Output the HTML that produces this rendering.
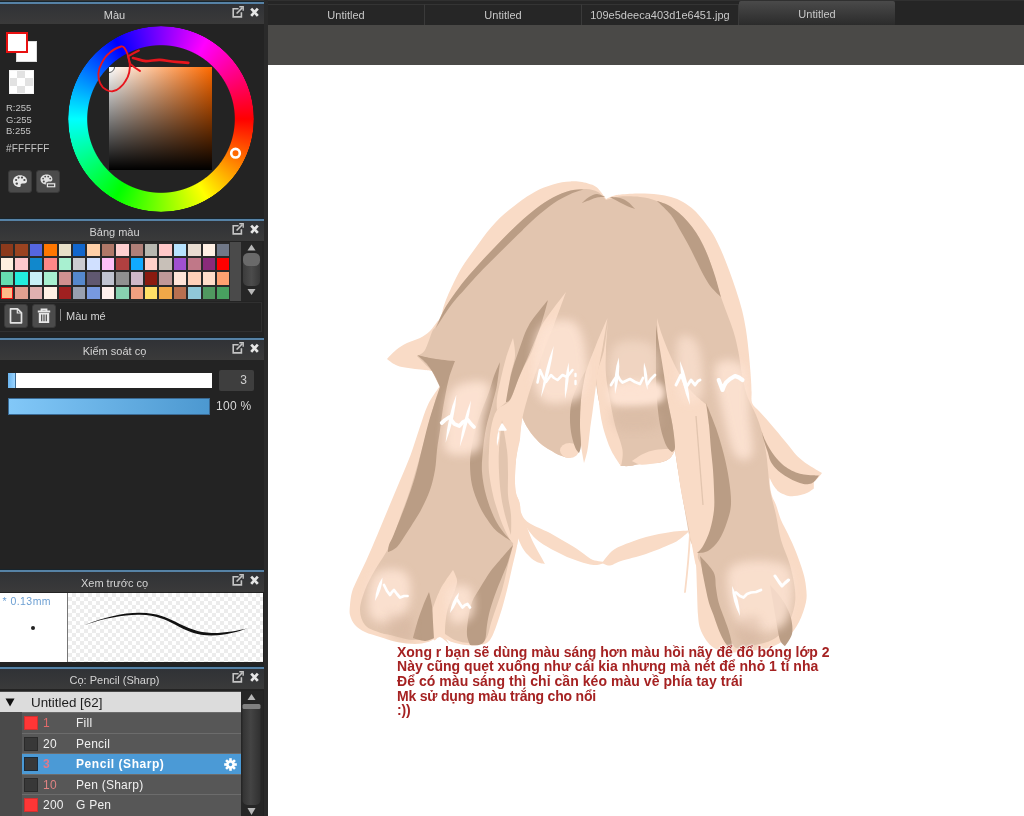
<!DOCTYPE html>
<html lang="vi">
<head>
<meta charset="utf-8">
<title>MediBang Paint</title>
<style>
*{box-sizing:border-box;margin:0;padding:0}
html,body{width:1024px;height:816px;overflow:hidden;background:#232323;font-family:"Liberation Sans",sans-serif;font-size:11px;color:#d0d0d0}
.abs{position:absolute}
#left,#main{will-change:transform}
#left{position:absolute;left:0;top:0;width:264px;height:816px;background:#232323;overflow:hidden}
#sep{position:absolute;left:264px;top:0;width:4px;height:816px;background:#2a2a2a}
#main{position:absolute;left:268px;top:0;width:756px;height:816px;background:#4a4947;overflow:hidden}
.ph{position:absolute;left:0;width:264px;height:22px;border-top:2px solid #5682a6;box-shadow:0 -1px 0 #17242c;background:linear-gradient(#303236,#3a3a3a);}
.ph .t{position:absolute;left:0;width:229px;top:4.5px;text-align:center;font-size:11px;color:#d4d4d4;line-height:13px}
.ph svg{position:absolute;top:0;left:0}

/* color panel */
#wheel{position:absolute;left:68px;top:26px;width:186px;height:186px;border-radius:50%;background:conic-gradient(from 90deg,#ff0000,#ffff00,#00ff00,#00ffff,#0000ff,#ff00ff,#ff0000);-webkit-mask:radial-gradient(circle closest-side,transparent 73.3px,#000 74.3px,#000 92.3px,transparent 93.2px);mask:radial-gradient(circle closest-side,transparent 73.3px,#000 74.3px,#000 92.3px,transparent 93.2px)}
#sv{position:absolute;left:109px;top:67px;width:103px;height:103px;background:linear-gradient(to top,#000,rgba(0,0,0,0)),linear-gradient(to right,#fff,#ff6a00);overflow:hidden}
.rgb{position:absolute;left:6px;font-size:9.5px;color:#c4c4c4;line-height:11px;white-space:nowrap}
.btn{position:absolute;background:#4b4b4b;border-radius:3px;border:1px solid #3a3a3a}
/* palette */
#pal{position:absolute;left:0;top:242px;width:230px;height:59px;background:#2a2a2a}
#pal i{position:absolute;width:12.4px;height:12.4px;display:block}

/* brush list */
.br{position:absolute;left:22px;width:219px;height:19.6px;background:#575757;font-size:12px;color:#f0f0f0;line-height:21px;white-space:nowrap;letter-spacing:.25px}
.br b{position:absolute;left:2px;top:3px;width:14px;height:14px;border:1px solid #2a2a2a;background:#383838}
.br b.r{background:#ff3636;border-color:#d03030}
.br s{position:absolute;left:21px;top:0;text-decoration:none}
.br u{position:absolute;left:54px;top:0;text-decoration:none}
/* tabs */
#tabbar{position:absolute;left:0;top:0;width:756px;height:25px;background:#252525;border-top:1px solid #303030}
.tab{position:absolute;top:3px;height:21px;background:#262626;border-top:1px solid #343434;border-right:1px solid #3a3a3a;color:#c8c8c8;font-size:11px;text-align:center;line-height:21px}
#canvas{position:absolute;left:0;top:65px;width:756px;height:751px;background:#fff}
#cap{position:absolute;left:129px;top:579.5px;font-size:14px;font-weight:bold;line-height:14.7px;color:#a52222;white-space:nowrap;text-shadow:0 0 2px #fff,0 0 2px #fff,0 0 3px #fff;letter-spacing:-.2px}
</style>
</head>
<body>
<div id="left">
  <div class="abs" style="left:0;top:0;width:264px;height:1px;background:#363636"></div><div class="abs" style="left:0;top:1px;width:264px;height:1px;background:#1e2428"></div>
  <!-- Color panel -->
  <div class="ph" style="top:2px"><svg style="top:-4px" width="264" height="26" viewBox="0 0 264 26"><g fill="none" stroke="#c4c4c4" stroke-width="1.6"><path d="M238.6 8.800H233.200V16.900H241.400V12.200"/><path d="M236.600 13.500L242.400 7.600"/><path d="M239.300 6.800H243.200V10.700" stroke-width="1.400"/></g><path d="M251.200 8.600L257.800 15.800M257.800 8.600L251.200 15.800" stroke="#e6e6e6" stroke-width="2.700" fill="none"/></svg><div class="t">Màu</div></div>
  
  <div id="wheel"></div>
  <div id="sv"><div class="abs" style="left:-6px;top:-6px;width:12px;height:12px;border:1px solid #555;border-radius:50%;background:#fff"></div></div>
  <svg class="abs" style="left:0;top:24px" width="264" height="195" viewBox="0 24 264 195">
    <circle cx="235.5" cy="153.2" r="4.3" fill="none" stroke="#fff" stroke-width="2.6"/>
    <path d="M121.1 46.5C116 48 112 50.5 109.3 53.2C105.5 56 103.5 59.5 101.8 62.9C99.8 66.5 98.6 70 98.4 73.6C98.2 77.5 98.8 80.5 100.2 83.3C101.6 86.3 103.6 88.4 106.1 89.7C108.2 90.9 110.4 91.5 112.6 91.3C115.4 91 117.8 89.6 120 87.6C122.3 85.8 124 83.6 125.4 81.1C127.3 78.4 128.5 75.6 129.2 72.5C129.9 69.6 130 66.8 129.7 63.9C129.5 60.5 128.7 57.3 127.6 54.3C126.8 51.8 125.8 49.6 124.4 47.8C123.4 46.6 122.2 46.2 121.1 46.5Z" fill="none" stroke="#e8151d" stroke-width="1.9" stroke-linejoin="round"/>
    <path d="M138.9 50.5C135 52.3 131.5 54.3 128.1 56.4C128.6 59 129.3 61.5 130.3 63.9C133 66.5 136.3 68.8 139.9 70.9" fill="none" stroke="#e8151d" stroke-width="2" stroke-linecap="round" stroke-linejoin="round"/>
    <path d="M133 58C137.5 59 141.5 60.6 145.9 61.2C150.5 61.2 155 59.6 159.8 59.8C165 60.2 170.5 61.6 175.9 61.8C180 62 184.5 62.3 188.3 62.9" fill="none" stroke="#e8151d" stroke-width="2.7" stroke-linecap="round" stroke-linejoin="round"/>
  </svg>
  <div class="abs" style="left:16px;top:41px;width:21px;height:21px;background:#fff;border:1px solid #ddd"></div>
  <div class="abs" style="left:6px;top:32px;width:22px;height:21px;background:#fff;border:2px solid #e81010"></div>
  <div class="abs" style="left:9px;top:70px;width:25px;height:24px;border:1px solid #f4f4f4;background-color:#fff;background-image:conic-gradient(#e2e2e2 25%,#fff 0 50%,#e2e2e2 0 75%,#fff 0);background-size:16px 16px;background-position:-1px -1px"></div>
  <div class="rgb" style="top:102px">R:255</div>
  <div class="rgb" style="top:113.5px">G:255</div>
  <div class="rgb" style="top:124.500px">B:255</div>
  <div class="rgb" style="top:143px;font-size:10px;letter-spacing:.2px">#FFFFFF</div>
  <div class="btn" style="left:8px;top:170px;width:24px;height:23px">
    <svg width="22" height="21" viewBox="0 0 22 21"><path d="M11 4.2c-4 0-7 2.6-7 6 0 3.300 2.800 5.800 6.300 5.800 1.100 0 1.600-.7 1.400-1.500-.3-1.100.3-2 1.500-2h2c1.700 0 2.800-1 2.800-2.700 0-3.200-3-5.600-7-5.600z" fill="#e8e8e8"/><g fill="#4b4b4b"><circle cx="7.100" cy="9" r="1.100"/><circle cx="9.600" cy="6.600" r="1.100"/><circle cx="13" cy="6.600" r="1.100"/><circle cx="15.400" cy="9" r="1.100"/><circle cx="7.800" cy="12.600" r="1.200"/></g></svg>
  </div>
  <div class="btn" style="left:36px;top:170px;width:24px;height:23px">
    <svg width="22" height="21" viewBox="0 0 22 21"><path d="M9.500 3.500c-3.500 0-6 2.200-6 5.100 0 2.800 2.400 4.900 5.300 4.900 1 0 1.400-.6 1.200-1.300-.2-.9.300-1.700 1.300-1.700h1.700c1.500 0 2.400-.9 2.400-2.300 0-2.700-2.500-4.700-5.900-4.700z" fill="#e0e0e0"/><g fill="#4b4b4b"><circle cx="6.100" cy="7.600" r=".9"/><circle cx="8.200" cy="5.600" r=".9"/><circle cx="11.200" cy="5.600" r=".9"/><circle cx="13.200" cy="7.600" r=".9"/><circle cx="6.800" cy="10.600" r="1"/></g><rect x="9.300" y="11.800" width="9.500" height="5" fill="#e8e8e8" stroke="#4b4b4b" stroke-width=".8"/><rect x="11" y="13.400" width="6" height="1.800" fill="#4b4b4b"/></svg>
  </div>
  <!-- Palette panel -->
  <div class="ph" style="top:219px"><svg style="top:-4px" width="264" height="26" viewBox="0 0 264 26"><g fill="none" stroke="#c4c4c4" stroke-width="1.6"><path d="M238.6 8.800H233.200V16.900H241.400V12.200"/><path d="M236.600 13.500L242.400 7.600"/><path d="M239.300 6.800H243.200V10.700" stroke-width="1.400"/></g><path d="M251.200 8.600L257.800 15.800M257.800 8.600L251.200 15.800" stroke="#e6e6e6" stroke-width="2.700" fill="none"/></svg><div class="t">Bảng màu</div></div>
  
  <div id="pal"><i style="left:1.0px;top:1.6px;background:#8b3a1c"></i><i style="left:15.4px;top:1.6px;background:#9a4320"></i><i style="left:29.8px;top:1.6px;background:#5566e0"></i><i style="left:44.2px;top:1.6px;background:#ff7700"></i><i style="left:58.6px;top:1.6px;background:#e8e0c8"></i><i style="left:73.0px;top:1.6px;background:#1166cc"></i><i style="left:87.4px;top:1.6px;background:#ffd0a8"></i><i style="left:101.8px;top:1.6px;background:#b07868"></i><i style="left:116.2px;top:1.6px;background:#ffd0d0"></i><i style="left:130.6px;top:1.6px;background:#b08078"></i><i style="left:145.0px;top:1.6px;background:#b8b8b0"></i><i style="left:159.4px;top:1.6px;background:#ffc8c8"></i><i style="left:173.8px;top:1.6px;background:#b8e4ff"></i><i style="left:188.2px;top:1.6px;background:#e8dcd0"></i><i style="left:202.6px;top:1.6px;background:#fff0e4"></i><i style="left:217.0px;top:1.6px;background:#707888"></i><i style="left:1.0px;top:16.0px;background:#fff0e0"></i><i style="left:15.4px;top:16.0px;background:#ffc8cc"></i><i style="left:29.8px;top:16.0px;background:#1188cc"></i><i style="left:44.2px;top:16.0px;background:#ff8888"></i><i style="left:58.6px;top:16.0px;background:#a8f0d0"></i><i style="left:73.0px;top:16.0px;background:#ccccd0"></i><i style="left:87.4px;top:16.0px;background:#d0e0ff"></i><i style="left:101.8px;top:16.0px;background:#ffc0f8"></i><i style="left:116.2px;top:16.0px;background:#b04040"></i><i style="left:130.6px;top:16.0px;background:#11aaff"></i><i style="left:145.0px;top:16.0px;background:#ffd0c8"></i><i style="left:159.4px;top:16.0px;background:#c8c0b8"></i><i style="left:173.8px;top:16.0px;background:#a050d0"></i><i style="left:188.2px;top:16.0px;background:#c07888"></i><i style="left:202.6px;top:16.0px;background:#8a2a7a"></i><i style="left:217.0px;top:16.0px;background:#ff0000"></i><i style="left:1.0px;top:30.4px;background:#66ddb0"></i><i style="left:15.4px;top:30.4px;background:#22eedd"></i><i style="left:29.8px;top:30.4px;background:#c8f0f8"></i><i style="left:44.2px;top:30.4px;background:#a8f0d0"></i><i style="left:58.6px;top:30.4px;background:#d09090"></i><i style="left:73.0px;top:30.4px;background:#5588cc"></i><i style="left:87.4px;top:30.4px;background:#605870"></i><i style="left:101.8px;top:30.4px;background:#c0c4d0"></i><i style="left:116.2px;top:30.4px;background:#909090"></i><i style="left:130.6px;top:30.4px;background:#d0b8c8"></i><i style="left:145.0px;top:30.4px;background:#8b1a10"></i><i style="left:159.4px;top:30.4px;background:#c09898"></i><i style="left:173.8px;top:30.4px;background:#ffe4d8"></i><i style="left:188.2px;top:30.4px;background:#ffd0b8"></i><i style="left:202.6px;top:30.4px;background:#ffdcc8"></i><i style="left:217.0px;top:30.4px;background:#ffa070"></i><i style="left:1.0px;top:44.8px;background:#ffbb88;border:1.5px solid #f01010"></i><i style="left:15.4px;top:44.8px;background:#e0a090"></i><i style="left:29.8px;top:44.8px;background:#e0b0b0"></i><i style="left:44.2px;top:44.8px;background:#fff0e4"></i><i style="left:58.6px;top:44.8px;background:#a02020"></i><i style="left:73.0px;top:44.8px;background:#98a0b0"></i><i style="left:87.4px;top:44.8px;background:#7799e0"></i><i style="left:101.8px;top:44.8px;background:#fff0ec"></i><i style="left:116.2px;top:44.8px;background:#88d0b0"></i><i style="left:130.6px;top:44.8px;background:#f0a080"></i><i style="left:145.0px;top:44.8px;background:#ffe066"></i><i style="left:159.4px;top:44.8px;background:#f0a848"></i><i style="left:173.8px;top:44.8px;background:#b87050"></i><i style="left:188.2px;top:44.8px;background:#90c8d8"></i><i style="left:202.6px;top:44.8px;background:#509860"></i><i style="left:217.0px;top:44.8px;background:#48a060"></i></div>
  <div class="abs" style="left:230px;top:242px;width:11px;height:59px;background:#4a4a4a"></div>
  <div class="abs" style="left:241px;top:242px;width:21px;height:59px;background:#262626">
    <svg width="21" height="59" viewBox="0 0 21 59"><defs><linearGradient id="sbg" x1="0" x2="1" y1="0" y2="0"><stop offset="0" stop-color="#3c3c3c"/><stop offset=".5" stop-color="#4c4c4c"/><stop offset="1" stop-color="#383838"/></linearGradient></defs><path d="M10.500 2.500L14.500 8.500H6.500Z" fill="#b8b8b8"/><rect x="2" y="11" width="17" height="33" rx="5" fill="url(#sbg)"/><rect x="2" y="11" width="17" height="13" rx="5.500" fill="#6a6a6a"/><path d="M10.500 53L14.500 47H6.500Z" fill="#b8b8b8"/></svg>
  </div>
  <div class="abs" style="left:0;top:302px;width:262px;height:30px;border:1px solid #303030;border-left:none;background:#232323"></div>
  <div class="btn" style="left:4px;top:304px;width:24px;height:24px">
    <svg width="22" height="22" viewBox="0 0 22 22"><path d="M5.500 3.800H12.500L16.500 7.800V17.800H5.500Z" fill="none" stroke="#e4e4e4" stroke-width="1.700" stroke-linejoin="round"/><path d="M12.300 4V8H16.300" fill="none" stroke="#e4e4e4" stroke-width="1.200"/></svg>
  </div>
  <div class="btn" style="left:32px;top:304px;width:24px;height:24px">
    <svg width="22" height="22" viewBox="0 0 22 22"><path d="M4.800 6.500H17.200M8.500 6V4.300H13.500V6" fill="none" stroke="#e8e8e8" stroke-width="1.800"/><path d="M5.800 8V18H16.200V8Z" fill="#e8e8e8"/><path d="M8.700 9.500V16.300M11 9.500V16.300M13.300 9.500V16.300" stroke="#4b4b4b" stroke-width="1.200"/></svg>
  </div>
  <div class="abs" style="left:60px;top:309px;width:1px;height:12px;background:#8a8a8a"></div>
  <div class="abs" style="left:66px;top:309px;font-size:11px;color:#d4d4d4;line-height:14px">Màu mé</div>
  <!-- Brush control -->
  <div class="ph" style="top:338px"><svg style="top:-4px" width="264" height="26" viewBox="0 0 264 26"><g fill="none" stroke="#c4c4c4" stroke-width="1.6"><path d="M238.6 8.800H233.200V16.900H241.400V12.200"/><path d="M236.600 13.500L242.400 7.600"/><path d="M239.300 6.800H243.200V10.700" stroke-width="1.400"/></g><path d="M251.200 8.600L257.800 15.800M257.800 8.600L251.200 15.800" stroke="#e6e6e6" stroke-width="2.700" fill="none"/></svg><div class="t">Kiểm soát cọ</div></div>
  
  <div class="abs" style="left:8px;top:373px;width:204px;height:15px;background:#fff"><div style="width:8px;height:15px;background:linear-gradient(to right,#6ab4ee,#9ad4ff);border-right:1px solid #3a6a94"></div></div>
  <div class="abs" style="left:219px;top:370px;width:35px;height:21px;background:#3e3e3e;border-radius:2px;color:#d0d0d0;font-size:12px;line-height:21px;text-align:right;padding-right:7px">3</div>
  <div class="abs" style="left:8px;top:398px;width:202px;height:17px;background:linear-gradient(to right,#82c8f8,#4c98d0);border:1px solid #3a6a94"></div>
  <div class="abs" style="left:216px;top:399px;font-size:12px;color:#d8d8d8;line-height:14px;letter-spacing:.3px">100 %</div>
  <!-- Brush preview -->
  <div class="ph" style="top:570px"><svg style="top:-4px" width="264" height="26" viewBox="0 0 264 26"><g fill="none" stroke="#c4c4c4" stroke-width="1.6"><path d="M238.6 8.800H233.200V16.900H241.400V12.200"/><path d="M236.600 13.500L242.400 7.600"/><path d="M239.300 6.800H243.200V10.700" stroke-width="1.400"/></g><path d="M251.200 8.600L257.800 15.800M257.800 8.600L251.200 15.800" stroke="#e6e6e6" stroke-width="2.700" fill="none"/></svg><div class="t">Xem trước cọ</div></div>
  
  <div class="abs" style="left:0;top:593px;width:67px;height:69px;background:#fff"></div>
  <div class="abs" style="left:2.5px;top:595px;font-size:10.5px;color:#6c9fd2;line-height:12px;letter-spacing:.45px">* 0.13mm</div>
  <div class="abs" style="left:31px;top:626px;width:4px;height:4px;border-radius:50%;background:#222"></div>
  <div class="abs" style="left:67px;top:593px;width:1px;height:69px;background:#777"></div>
  <div class="abs" style="left:68px;top:593px;width:195px;height:69px;background-color:#fff;background-image:conic-gradient(#ececec 25%,#fff 0 50%,#ececec 0 75%,#fff 0);background-size:8px 8px"></div>
  <svg class="abs" style="left:68px;top:593px" width="195" height="69" viewBox="68 593 195 69"><path d="M84.6 624.9C105 616.8 125 612.4 140 612.7C158 613 166 617.300 175 621.6C188 628.2 198 632.8 212 632.900C226 633 238 630.5 248.7 627.900C238 631.5 226 635.3 212 635.5C197 635.600 187 631.2 174.500 624.2C165 619.5 157 615.2 140 614.7C125 614.300 105 618 84.6 624.900Z" fill="#111"/></svg>
  <!-- Brush list -->
  <div class="ph" style="top:667px"><svg style="top:-4px" width="264" height="26" viewBox="0 0 264 26"><g fill="none" stroke="#c4c4c4" stroke-width="1.6"><path d="M238.6 8.800H233.200V16.900H241.400V12.200"/><path d="M236.600 13.500L242.400 7.600"/><path d="M239.300 6.800H243.200V10.700" stroke-width="1.400"/></g><path d="M251.200 8.600L257.800 15.800M257.800 8.600L251.200 15.800" stroke="#e6e6e6" stroke-width="2.700" fill="none"/></svg><div class="t">Cọ: Pencil (Sharp)</div></div>

  <div class="abs" style="left:0;top:691px;width:241px;height:125px;background:#4a4a4a"></div>
  <div class="abs" style="left:0;top:692px;width:241px;height:20px;background:#dcdcdc;color:#1c1c1c;font-size:13.4px;line-height:21px"><svg class="abs" style="left:5px;top:6px" width="10" height="9" viewBox="0 0 10 9"><path d="M0.500 0.500H9.500L5 8.500Z" fill="#111"/></svg><span class="abs" style="left:31px;top:0;white-space:nowrap">Untitled [62]</span></div>
  <div class="abs" style="left:22px;top:712px;width:219px;height:104px;background:#6c6c6c"></div>
  <div class="br" style="top:713px"><b class="r"></b><s style="color:#e06a6a">1</s><u>Fill</u></div>
  <div class="br" style="top:733.6px"><b></b><s>20</s><u>Pencil</u></div>
  <div class="br" style="top:754.200px;background:#4b9ad6;font-weight:bold;color:#fff;letter-spacing:.55px"><b style="border-color:#1a2a3a"></b><s style="color:#e07a8a">3</s><u>Pencil (Sharp)</u>
    <svg class="abs" style="left:202px;top:4px" width="13" height="13" viewBox="-6.500 -6.500 13 13"><g fill="#fff"><circle r="4.300"/><rect x="-1.300" y="-6.300" width="2.600" height="12.600"/><rect x="-6.300" y="-1.300" width="12.600" height="2.600"/><g transform="rotate(45)"><rect x="-1.300" y="-6.300" width="2.600" height="12.600"/><rect x="-6.300" y="-1.300" width="12.600" height="2.600"/></g></g><circle r="1.700" fill="#4b9ad6"/></svg>
  </div>
  <div class="br" style="top:774.800px"><b></b><s style="color:#e08484">10</s><u>Pen (Sharp)</u></div>
  <div class="br" style="top:795.400px;height:21px"><b class="r"></b><s>200</s><u>G Pen</u></div>
  <div class="abs" style="left:241px;top:691px;width:22px;height:125px;background:#262626">
    <svg width="22" height="125" viewBox="0 0 22 125"><defs><linearGradient id="sbg2" x1="0" x2="1" y1="0" y2="0"><stop offset="0" stop-color="#333"/><stop offset=".45" stop-color="#444"/><stop offset="1" stop-color="#303030"/></linearGradient></defs><path d="M10.500 3L14.500 9H6.500Z" fill="#b8b8b8"/><rect x="1.500" y="13" width="18" height="101" rx="5" fill="url(#sbg2)"/><rect x="1.500" y="13" width="18" height="5" rx="1.500" fill="#808080"/><path d="M10.500 124L14.500 117H6.500Z" fill="#b8b8b8"/></svg>
  </div>
</div>
<div id="sep"></div>
<div id="main">
  <div id="tabbar">
    <div class="tab" style="left:0;width:157px">Untitled</div>
    <div class="tab" style="left:157px;width:157px">Untitled</div>
    <div class="tab" style="left:314px;width:157px">109e5deeca403d1e6451.jpg</div>
    <div class="tab" style="left:471px;width:156px;top:0;height:24px;line-height:26px;border:none;border-radius:2px 2px 0 0;background:linear-gradient(#4a4a4a,#2b2b2b)">Untitled</div>
  </div>
  <div id="canvas"><svg class="abs" style="left:0;top:0" width="756" height="751" viewBox="268 65 756 751"><defs><filter id="b3" x="-30%" y="-30%" width="160%" height="160%"><feGaussianBlur stdDeviation="3"/></filter><filter id="b5" x="-30%" y="-30%" width="160%" height="160%"><feGaussianBlur stdDeviation="5"/></filter><filter id="b2" x="-30%" y="-30%" width="160%" height="160%"><feGaussianBlur stdDeviation="1.6"/></filter></defs>
<path d="M387 359C387 359 392.7 352.7 396 350C399.3 347.3 403 345 407 343C411 341 416.2 340 420 338C423.8 336 427.2 333.7 430 331C432.8 328.3 435.2 324.2 437 322C438.8 319.8 439.4 320.5 440.5 318C441.6 315.5 442.3 310.7 443.5 307C444.7 303.3 445.5 300.8 447.6 296C449.7 291.2 453.1 283.6 456 278C458.9 272.4 462 267.3 465 262.6C468 257.9 471.1 254.1 474 250C476.9 245.9 479.9 241.8 482.7 238C485.5 234.2 488.1 230.9 491 227.5C493.9 224.1 497 220.7 500 217.8C503 214.9 506 212.5 509 210C512 207.5 515 205.2 518 203C521 200.8 524.1 198.4 527 196.5C529.9 194.6 532.7 192.9 535.5 191.4C538.3 189.9 541.1 188.7 544 187.5C546.9 186.3 550 185.3 553 184.4C556 183.5 559.1 182.8 562 182.3C564.9 181.8 567.6 181.5 570.6 181.4C573.6 181.3 577.1 181.5 580 181.8C582.9 182.2 585.2 182.6 588 183.5C590.8 184.4 594 184.9 597 187.5C600 190.1 606 199 606 199C606 199 610.5 196.8 613 196C615.5 195.2 616.5 194.9 621 194.5C625.5 194.1 633.8 193.5 640 193.5C646.2 193.5 652.8 193.9 658 194.5C663.2 195.1 666.8 195.8 671 197C675.2 198.2 679.2 199.8 683 202C686.8 204.2 690.7 207 694 210C697.3 213 699.8 216 703 220C706.2 224 710 229 713 234C716 239 718.3 244 721 250C723.7 256 726.5 263.3 729 270C731.5 276.7 733.8 283.3 736 290C738.2 296.7 740.3 303.3 742 310C743.7 316.7 744.8 322.5 746 330C747.2 337.5 748.2 346.7 749 355C749.8 363.3 750.6 373.8 751 380C751.4 386.2 751.3 388.2 751.5 392C751.7 395.8 750.8 399.8 752 403C753.2 406.2 756.5 408.3 759 411C761.5 413.7 764.3 416.6 766.8 419.4C769.3 422.2 771.5 425.1 774 428C776.5 430.9 779 434 781.5 437C784 440 786.6 443.1 789 446C791.4 448.9 793.7 452.2 796 454.7C798.3 457.2 800.5 459 803 461C805.5 463 807.7 464.5 810.9 466.5C814.1 468.5 822 473 822 473C822 473 819.4 476.5 818 478C816.6 479.5 813.8 482 813.8 482C813.8 482 813.8 488.5 813.8 488.5C813.8 488.5 810.2 491.4 808 492.5C805.8 493.6 802.9 494.4 800.6 495C798.3 495.6 796 495.8 794 496C792 496.2 790.6 496.3 788.8 496C787 495.7 784.7 494.8 783 494C781.3 493.2 780.1 492.9 778.5 491.5C776.9 490.1 775 487.8 773.5 485.5C772 483.2 769.7 478 769.7 478C769.7 478 769.6 483 770 486C770.4 489 771 492.8 772 496C773 499.2 774.5 501 776 505C777.5 509 779 515.2 781 520C783 524.8 785.5 528.7 788 534C790.5 539.3 793.5 545.7 796 552C798.5 558.3 801.3 566.2 803 572C804.7 577.8 805.5 582 806 587C806.5 592 807.2 596.2 806 602C804.8 607.8 802 616.2 799 622C796 627.8 792.2 633 788 637C783.8 641 779 643.8 774 646C769 648.2 763.3 649 758 650C752.7 651 747.3 651.7 742 652C736.7 652.3 730.7 652.7 726 652C721.3 651.3 717.3 650 714 648C710.7 646 708.3 643.3 706 640C703.7 636.7 701.3 632.2 700 628C698.7 623.8 698.5 621.3 698 615C697.5 608.7 697.3 598.3 697 590C696.7 581.7 696.5 571.3 696 565C695.5 558.7 694.8 556.2 694 552C693.2 547.8 692.3 546.2 691 540C689.7 533.8 687.7 523.3 686 515C684.3 506.7 682.3 497.5 681 490C679.7 482.5 679 476.7 678 470C677 463.3 675 450 675 450C675 450 672.2 456 670 458C667.8 460 665 461.2 662 462C659 462.8 655.7 462.7 652 463C648.3 463.3 643.7 463.5 640 464C636.3 464.5 633.2 465.7 630 466C626.8 466.3 621 466 621 466C621 466 616.8 458.3 615 454C613.2 449.7 611.8 445.7 610 440C608.2 434.3 605.9 426.7 604 420C602.1 413.3 600 406.3 598.7 400C597.4 393.7 596 382 596 382C596 382 592.2 401 590 410C587.8 419 584.7 430.2 583 436C581.3 441.8 580.9 442.2 580 445C579.1 447.8 578.5 450.7 577.5 452.5C576.5 454.3 575.7 455.2 574 456C572.3 456.8 570 457.7 567.5 457.5C565 457.3 561.9 456.2 559 455C556.1 453.8 553 451.8 550 450C547 448.2 543.9 446.5 541 444C538.1 441.5 534.8 437.8 532.5 435C530.2 432.2 528.8 430 527 427C525.2 424 522 417 522 417C522 417 520 440 520 440C520 440 516.8 453.3 516 460C515.2 466.7 515 474.5 515 480C515 485.5 515.2 488.8 516 493C516.8 497.2 519.3 499.7 520 505C520.7 510.3 520.5 518.2 520 525C519.5 531.8 518.3 538.8 517 546C515.7 553.2 513.7 560.7 512 568C510.3 575.3 509 582.2 507 590C505 597.8 502.8 606.7 500 615C497.2 623.3 493.7 635 490 640C486.3 645 482.2 644.2 478 645C473.8 645.8 469.3 645.5 465 645C460.7 644.5 456.2 643.3 452 642C447.8 640.7 444 637 440 637C436 637 432.2 640.8 428 642C423.8 643.2 420.2 644 415 644C409.8 644 402.8 643.2 397 642C391.2 640.8 385.3 638.7 380 637C374.7 635.3 369.2 634 365 632C360.8 630 357.5 627.8 355 625C352.5 622.2 350.8 618.3 350 615C349.2 611.7 349.7 608.8 350 605C350.3 601.2 350.8 596.2 352 592C353.2 587.8 354.6 585.3 357 580C359.4 574.7 363.1 567.6 366.5 560C369.9 552.4 373.8 543.1 377.5 534.4C381.2 525.7 384.8 516.8 388.5 508C392.2 499.2 395.9 490.3 399.6 481.5C403.3 472.7 407.3 463.8 410.6 455C413.9 446.2 416.5 436.9 419.4 428.5C422.3 420.1 424.8 411.4 428.2 404.3C431.6 397.2 440 386 440 386C440 386 437.3 380.5 436 378C434.7 375.5 432 371 432 371C432 371 427.8 370.3 425 370C422.2 369.7 418.8 369.5 415 369C411.2 368.5 405.5 367.8 402 367C398.5 366.2 396.5 365.3 394 364C391.5 362.7 387 359 387 359Z" fill="#f9dbc6"/>
<path d="M606 200C606 200 601.3 193.8 598 192C594.7 190.2 590.6 189.2 586 189C581.4 188.8 576.1 189.1 570.6 190.5C565.1 191.9 558.9 194.5 553 197.6C547.1 200.7 541.3 204.6 535.5 209C529.7 213.4 523.9 218.6 518 224C512.1 229.4 506.2 235.5 500.3 241.5C494.4 247.5 488.6 253.6 482.7 260C476.8 266.4 469.9 274 465 280C460.1 286 456.5 291 453 296C449.5 301 446.8 305 444 310C441.2 315 438 322.3 436 326C434 329.7 433.8 328 432 332C430.2 336 427.5 346 425 350C422.5 354 417 356 417 356C417 356 432 371 432 371C432 371 440 387 440 387C440 387 437.1 394.4 434 405C430.9 415.6 425.6 436.4 421.6 450.6C417.6 464.8 413.4 479.3 410 490C406.6 500.7 404.3 505.8 401 515C397.7 524.2 394.3 535.8 390 545C385.7 554.2 379.2 562.5 375 570C370.8 577.5 367.5 583.3 365 590C362.5 596.7 360 604.2 360 610C360 615.8 362 621.3 365 625C368 628.7 373.8 630.3 378 632C382.2 633.7 384.3 633.7 390 635C395.7 636.3 405.7 639.5 412 640C418.3 640.5 423.3 639.3 428 638C432.7 636.7 435.5 631.7 440 632C444.5 632.3 450 638.2 455 640C460 641.8 465 643 470 643C475 643 481.3 643.8 485 640C488.7 636.2 489.2 628.3 492 620C494.8 611.7 499.3 599.2 502 590C504.7 580.8 506.2 572.5 508 565C509.8 557.5 511.5 551.7 513 545C514.5 538.3 516.3 531.7 517 525C517.7 518.3 517.5 512.5 517 505C516.5 497.5 513.8 490.8 514 480C514.2 469.2 518 440 518 440C518 440 522 417 522 417C522 417 525.2 424 527 427C528.8 430 530.2 432.2 532.5 435C534.8 437.8 538.1 441.5 541 444C543.9 446.5 547 448.2 550 450C553 451.8 556.1 453.8 559 455C561.9 456.2 565 457.3 567.5 457.5C570 457.7 572.3 456.8 574 456C575.7 455.2 576.5 454.3 577.5 452.5C578.5 450.7 579.1 447.8 580 445C580.9 442.2 581.3 441.8 583 436C584.7 430.2 587.8 419 590 410C592.2 401 596 382 596 382C596 382 597.4 393.7 598.7 400C600 406.3 602.1 413.3 604 420C605.9 426.7 608.2 434.3 610 440C611.8 445.7 613.2 449.7 615 454C616.8 458.3 621 466 621 466C621 466 626.8 466.3 630 466C633.2 465.7 636.3 464.5 640 464C643.7 463.5 648.3 463.3 652 463C655.7 462.7 659 462.8 662 462C665 461.2 667.8 460 670 458C672.2 456 675 450 675 450C675 450 676.7 461.7 678 470C679.3 478.3 681 488.3 683 500C685 511.7 690 540 690 540C690 540 698.2 557.5 701 565C703.8 572.5 705 578.8 707 585C709 591.2 710.8 596.5 713 602C715.2 607.5 717.8 613.3 720 618C722.2 622.7 723.3 625 726 630C728.7 635 731.2 645.5 736 648C740.8 650.5 749 646.3 755 645C761 643.7 766.8 642.8 772 640C777.2 637.2 782.3 633.3 786 628C789.7 622.7 792.5 614.3 794 608C795.5 601.7 795.7 597.2 795 590C794.3 582.8 792.3 573.3 790 565C787.7 556.7 783.3 548.3 781 540C778.7 531.7 777.8 523.3 776 515C774.2 506.7 771.3 497.5 770 490C768.7 482.5 768.7 476.3 768 470C767.3 463.7 767.1 458.5 766 452C764.9 445.5 763.3 437.2 761.6 431C759.9 424.8 758.3 420.5 756 415C753.7 409.5 750.2 403.8 748 398C745.8 392.2 744.7 388 743 380C741.3 372 739.7 358.3 738 350C736.3 341.7 735.8 338.8 733 330C730.2 321.2 725.1 309.1 721 297C716.9 284.9 712.7 268.2 708.5 257.5C704.3 246.8 701 240 696 232.5C691 225 685 217.8 678.5 212.5C672 207.2 663.4 203.6 657 201C650.6 198.4 646 197.8 640 197C634 196.2 625.5 196.3 621 196.5C616.5 196.7 615.5 197.4 613 198C610.5 198.6 606 200 606 200Z" fill="#e2c5af"/>
<path d="M566 292C566 292 557.7 315.3 554 325C550.3 334.7 547.2 341.7 544 350C540.8 358.3 537.8 366.7 535 375C532.2 383.3 529.2 392.5 527 400C524.8 407.5 523.3 413.3 522 420C520.7 426.7 520 433.3 519 440C518 446.7 516.7 453.3 516 460C515.3 466.7 515 474.5 515 480C515 485.5 515.2 488.8 516 493C516.8 497.2 519.3 499.7 520 505C520.7 510.3 520.5 518.2 520 525C519.5 531.8 517 546 517 546C517 546 513.2 544 511 541C508.8 538 506.2 532.8 504 528C501.8 523.2 499.8 517.5 498 512C496.2 506.5 494.5 501.7 493 495C491.5 488.3 489.7 479.5 489 472C488.3 464.5 488.7 457.3 489 450C489.3 442.7 489.7 434.7 491 428C492.3 421.3 493.8 414.7 497 410C500.2 405.3 506.2 405.8 510 400C513.8 394.2 516.2 383.3 520 375C523.8 366.7 528.8 358.3 532.5 350C536.2 341.7 536.4 334.7 542 325C547.6 315.3 566 292 566 292Z" fill="#f9dbc6"/>
<path d="M513 338C513 338 508 351.3 506 358C504 364.7 502.5 371.3 501 378C499.5 384.7 497.7 392.7 497 398C496.3 403.3 497 410 497 410C497 410 503 405 505 403C507 401 508.2 402.2 509 398C509.8 393.8 509 385 510 378C511 371 514.5 362.7 515 356C515.5 349.3 513 338 513 338Z" fill="#f9dbc6"/>
<path d="M502 420C502 420 499.5 441.3 499 450C498.5 458.7 498.7 464.5 499 472C499.3 479.5 500 487.8 501 495C502 502.2 503.3 508.3 505 515C506.7 521.7 511 535 511 535C511 535 511.5 521.7 511 515C510.5 508.3 508.5 502.2 508 495C507.5 487.8 508.2 479.5 508 472C507.8 464.5 508 458.7 507 450C506 441.3 502 420 502 420Z" fill="#e2c5af"/>
<path d="M607.5 318C607.5 318 599.8 335.5 596 345C592.2 354.5 587.5 365.8 585 375C582.5 384.2 581.8 391.7 581 400C580.2 408.3 580 417.5 580 425C580 432.5 580.3 438.7 581 445C581.7 451.3 584 463 584 463C584 463 586.5 455.5 587.5 450C588.5 444.5 589.2 436.3 590 430C590.8 423.7 591.2 421.2 592.5 412C593.8 402.8 595.8 386.2 597.5 375C599.2 363.8 601.3 354.5 603 345C604.7 335.5 607.5 318 607.5 318Z" fill="#f9dbc6"/>
<path d="M608 320C608 320 605.8 340.8 604 350C602.2 359.2 597.9 366.7 597 375C596.1 383.3 597.8 391.7 598.7 400C599.6 408.3 600.5 416.7 602.5 425C604.5 433.3 607.9 443.2 611 450C614.1 456.8 621 466 621 466C621 466 623.5 456.8 622.5 450C621.5 443.2 617.1 433.3 615 425C612.9 416.7 611.5 408.3 610 400C608.5 391.7 606.7 383.3 606 375C605.3 366.7 605.7 359.2 606 350C606.3 340.8 608 320 608 320Z" fill="#f9dbc6"/>
<path d="M632 461C632 461 639.2 455.8 643 454C646.8 452.2 650.8 450.8 655 450C659.2 449.2 664.7 449 668 449C671.3 449 675 450 675 450C675 450 672.2 456 670 458C667.8 460 665.3 461 662 462C658.7 463 653.7 463.6 650 464C646.3 464.4 643 465 640 464.5C637 464 632 461 632 461Z" fill="#f9dbc6"/>
<path d="M657 318C657 318 659.8 328.8 662 335C664.2 341.2 667 348.3 670 355C673 361.7 676.3 368.8 680 375C683.7 381.2 687.5 387 692 392C696.5 397 707 405 707 405C707 405 709.2 417.5 710 425C710.8 432.5 711.3 442.5 712 450C712.7 457.5 713.5 463.3 714 470C714.5 476.7 714.7 483.3 715 490C715.3 496.7 716.3 503.3 716 510C715.7 516.7 714.8 523.8 713 530C711.2 536.2 707.5 543.2 705 547C702.5 550.8 698 553 698 553C698 553 697.2 567.2 696 565C694.8 562.8 692.7 548.3 691 540C689.3 531.7 687.7 523.3 686 515C684.3 506.7 682.3 497.5 681 490C679.7 482.5 679 476.7 678 470C677 463.3 675.9 457.5 675 450C674.1 442.5 673.8 433.3 672.5 425C671.2 416.7 669.1 408.3 667.5 400C665.9 391.7 664.4 383.3 663 375C661.6 366.7 660 359.5 659 350C658 340.5 657 318 657 318Z" fill="#f9dbc6"/>
<path d="M696 416C698 440 700 470 703 505" fill="none" stroke="#e2c5af" stroke-width="1.3"/>
<ellipse cx="569.5" cy="450.5" rx="9.5" ry="7.5" fill="#f9dbc6"/>
<path d="M453 570C453 570 448.2 576.7 446 580C443.8 583.3 441.8 586.3 440 590C438.2 593.7 436.5 597.8 435 602C433.5 606.2 431.7 610.3 431 615C430.3 619.7 430.5 625.8 431 630C431.5 634.2 432.5 638.8 434 640C435.5 641.2 437.3 636.2 440 637C442.7 637.8 450 645 450 645C450 645 446.8 640.5 446 638C445.2 635.5 444.8 634.7 445 630C445.2 625.3 445.8 616.7 447.5 610C449.2 603.3 453.4 595 455 590C456.6 585 457.3 583.3 457 580C456.7 576.7 453 570 453 570Z" fill="#f9dbc6"/>
<path d="M516 500C516 500 514 519.2 515 527C516 534.8 519.5 542 522 547C524.5 552 527.5 554.5 530 557C532.5 559.5 534.5 560.8 537 562C539.5 563.2 545 564 545 564C545 564 542.2 559 540 555C537.8 551 534.5 545.5 532 540C529.5 534.5 527.7 528.7 525 522C522.3 515.3 516 500 516 500Z" fill="#f9dbc6"/>
<path d="M519 512C519 512 523.8 518.9 527 521.5C530.2 524.1 534.2 525.6 538 527.5C541.8 529.4 546 530.9 550 533C554 535.1 558 537.7 562 540C566 542.3 570.3 544.7 574 547C577.7 549.3 580.8 551.8 584 554C587.2 556.2 589.3 558.7 593 560C596.7 561.3 606 562 606 562C606 562 600 564.7 597 565C594 565.3 591.2 564.7 588 564C584.8 563.3 581.5 562.2 578 561C574.5 559.8 570.5 558.5 567 557C563.5 555.5 560.5 553.8 557 552C553.5 550.2 549.5 548.2 546 546C542.5 543.8 539.2 542 536 539C532.8 536 529.8 532.5 527 528C524.2 523.5 519 512 519 512Z" fill="#f9dbc6"/>
<path d="M602 563C602 563 607.8 554.8 611 552C614.2 549.2 615.2 548.5 621 546C626.8 543.5 637.7 539.3 646 537C654.3 534.7 663.7 533.1 671 532C678.3 530.9 690 530.5 690 530.5C690 530.5 683.2 536.8 680 539C676.8 541.2 676.7 541.5 671 544C665.3 546.5 654.3 551.2 646 554C637.7 556.8 627 559.1 621 561C615 562.9 613.2 565.2 610 565.5C606.8 565.8 602 563 602 563Z" fill="#f9dbc6"/>
<path d="M690 534C689 555 687 575 685 592" fill="none" stroke="#f9dbc6" stroke-width="1.8" stroke-linecap="round"/>
<path d="M584 189.5C584 189.5 575.8 189.2 570.6 190.5C565.4 191.8 558.9 194.5 553 197.6C547.1 200.7 541.3 204.6 535.5 209C529.7 213.4 523.9 218.6 518 224C512.1 229.4 506.2 235.5 500.3 241.5C494.4 247.5 488.6 253.6 482.7 260C476.8 266.4 469.9 274 465 280C460.1 286 456.5 291 453 296C449.5 301 446.8 304.7 444 310C441.2 315.3 436 328 436 328C436 328 444.3 314.8 447.6 310C450.9 305.2 453.1 302.5 456 299C458.9 295.5 460.6 293.9 465 289C469.4 284.1 476.8 275.8 482.7 269.6C488.6 263.4 494.4 257.9 500.3 252C506.2 246.2 512.1 240.2 518 234.5C523.9 228.8 529.7 222.9 535.5 217.8C541.3 212.7 547.1 207.7 553 203.7C558.9 199.7 565.4 196.4 570.6 194C575.8 191.6 584 189.5 584 189.5Z" fill="#ba9d85"/>
<path d="M582 203C582 203 586.5 198.5 589 197C591.5 195.5 594.3 194 597 194C599.7 194 605 197 605 197C605 197 599.5 197 597 197.5C594.5 198 592.5 199.1 590 200C587.5 200.9 582 203 582 203Z" fill="#ba9d85"/>
<path d="M610 197C610 197 617 197.2 620 198C623 198.8 625.5 200.2 628 202C630.5 203.8 635 209 635 209C635 209 629.7 207.2 627 206C624.3 204.8 621.8 203.5 619 202C616.2 200.5 610 197 610 197Z" fill="#ba9d85"/>
<path d="M657 201C657 201 664.4 203.1 668 205C671.6 206.9 675.2 209.7 678.5 212.5C681.8 215.3 685.1 218.7 688 222C690.9 225.3 693.5 228.7 696 232.5C698.5 236.3 700.9 240.8 703 245C705.1 249.2 706.5 252.3 708.5 257.5C710.5 262.7 712.9 269.4 715 276C717.1 282.6 721 297 721 297C721 297 713.9 290.7 711 287C708.1 283.3 706 279.5 703.5 275C701 270.5 698.5 265 696 260C693.5 255 691.2 250 688.5 245C685.8 240 682.9 235 680 230C677.1 225 674.8 219.8 671 215C667.2 210.2 657 201 657 201Z" fill="#ba9d85"/>
<path d="M455 361C455 361 450.7 372 449 378C447.3 384 446.2 390.8 445 397C443.8 403.2 442.8 409.5 442 415C441.2 420.5 440.8 424.2 440 430C439.2 435.8 437.8 443.3 437 450C436.2 456.7 436.2 463.3 435 470C433.8 476.7 432.2 483.7 430 490C427.8 496.3 424.5 503 422 508C419.5 513 417.7 515.7 415 520C412.3 524.3 409 529.5 406 534C403 538.5 400 544 397 547C394 550 388 552 388 552C388 552 388 548 389 545C390 542 391.2 540.9 394 534C396.8 527.1 402.5 513 406 503.5C409.5 494 412.4 485.8 415 477C417.6 468.2 419.4 459.4 421.6 450.6C423.8 441.8 426.1 431.6 428.2 424C430.3 416.4 432 411.2 434 405C436 398.8 440 387 440 387C440 387 437.3 380.7 436 378C434.7 375.3 432 371 432 371C432 371 428.5 365.7 426 363C423.5 360.3 417 355 417 355C417 355 429.7 358 436 359C442.3 360 455 361 455 361Z" fill="#ba9d85"/>
<path d="M500 362C500 362 495.8 371 494 376C492.2 381 491 386.3 489 392C487 397.7 484.2 404 482 410C479.8 416 477.7 422.2 476 428C474.3 433.8 473 439.1 472 445C471 450.9 470 456.8 470 463.5C470 470.2 470.5 478.1 472 485C473.5 491.9 476.5 499.3 479 505C481.5 510.7 484.1 514.7 487 519C489.9 523.3 492.5 527.3 496.5 531C500.5 534.7 511 541 511 541C511 541 503.9 533.2 501 529C498.1 524.8 496 521.7 493.5 516C491 510.3 487.9 502.3 486 495C484.1 487.7 482.5 479.5 482 472C481.5 464.5 482.3 457.3 483 450C483.7 442.7 484.5 435.5 486 428C487.5 420.5 490.2 412.2 492 405C493.8 397.8 495.7 392.2 497 385C498.3 377.8 500 362 500 362Z" fill="#ba9d85"/>
<path d="M548 300C548 300 543.8 316.7 541 325C538.2 333.3 534.5 341.7 531 350C527.5 358.3 523.3 367 520 375C516.7 383 513.3 393.5 511 398C508.7 402.5 506 402 506 402C506 402 508.8 383.7 511 375C513.2 366.3 516 358.3 519 350C522 341.7 524.2 333.3 529 325C533.8 316.7 548 300 548 300Z" fill="#ba9d85"/>
<path d="M586 370C586 370 580.3 380 578 385C575.7 390 573.3 395 572 400C570.7 405 570.2 409.7 570 415C569.8 420.3 570.2 426.7 571 432C571.8 437.3 573.7 443.5 575 447C576.3 450.5 579 453 579 453C579 453 580.8 449.7 581 445C581.2 440.3 580 432.5 580 425C580 417.5 580.2 408.3 581 400C581.8 391.7 584.2 380 585 375C585.8 370 586 370 586 370Z" fill="#ba9d85"/>
<path d="M656 325C656 325 656 341.7 656 350C656 358.3 655.8 366.7 656 375C656.2 383.3 656.3 391.7 657 400C657.7 408.3 658.5 417.5 660 425C661.5 432.5 664 440.5 666 445C668 449.5 672 452 672 452C672 452 674.9 451.5 675 447C675.1 442.5 673.8 432.8 672.5 425C671.2 417.2 668.9 408.3 667.5 400C666.1 391.7 665.2 383.3 664 375C662.8 366.7 661.3 358.3 660 350C658.7 341.7 656 325 656 325Z" fill="#ba9d85"/>
<path d="M706 403C706 403 708.2 417.2 709 425C709.8 432.8 710.3 442.5 711 450C711.7 457.5 712.5 463.3 713 470C713.5 476.7 713.8 483.3 714 490C714.2 496.7 714.7 503.3 714 510C713.3 516.7 711.8 524 710 530C708.2 536 705.2 542.2 703 546C700.8 549.8 697 553 697 553C697 553 704.3 553.2 708 551C711.7 548.8 715.8 544.8 719 540C722.2 535.2 725 528 727 522C729 516 730.7 511 731 504C731.3 497 730.2 488.2 729 480C727.8 471.8 726.2 463.7 724 455C721.8 446.3 719 436.7 716 428C713 419.3 706 403 706 403Z" fill="#ba9d85"/>
<path d="M761.6 431C761.6 431 763.6 437 765 440C766.4 443 768 446.1 769.7 448.8C771.4 451.6 773 454.1 775 456.5C777 458.9 779.3 461.5 781.5 463.5C783.7 465.5 785.6 467 788 468.5C790.4 470 793.3 471.4 796 472.4C798.7 473.4 801.3 474 804 474.5C806.7 475 809.9 475.1 812.4 475.3C814.9 475.5 819 475.5 819 475.5C819 475.5 815.5 480.6 813.8 482C812.1 483.4 810.7 483.7 809 484C807.3 484.3 805.7 484.4 803.5 484C801.3 483.6 798.5 482.5 796 481.5C793.5 480.5 791.3 479.4 788.8 478C786.3 476.6 783.5 474.9 781 473C778.5 471.1 775.8 468.7 774 466.5C772.2 464.3 771 462.2 770 460C769 457.8 769 456.2 768 453C767 449.8 765.1 444.7 764 441C762.9 437.3 761.6 431 761.6 431Z" fill="#ba9d85"/>
<path d="M700 556C700 556 702 569.3 703 575C704 580.7 705 585.3 706 590C707 594.7 707.8 598.8 709 603C710.2 607.2 712 610.8 713.5 615C715 619.2 716.3 623.8 718 628C719.7 632.2 721.5 636.5 723.5 640C725.5 643.5 730 649 730 649C730 649 732.2 648.2 732 645C731.8 641.8 730 635 728.5 630C727 625 724.7 619.7 723 615C721.3 610.3 719.7 606.5 718.5 602C717.3 597.5 716.8 593 716 588C715.2 583 716.2 577.3 713.5 572C710.8 566.7 700 556 700 556Z" fill="#ba9d85"/>
<path d="M770 585C770 585 772 596.2 773 602C774 607.8 774.8 613.7 776 620C777.2 626.3 778.5 635.7 780 640C781.5 644.3 785 646 785 646C785 646 791 638.7 792 634C793 629.3 792.2 623 791 618C789.8 613 787.2 608 785 604C782.8 600 780.5 597.2 778 594C775.5 590.8 770 585 770 585Z" fill="#ba9d85"/>
<path d="M429 592C429 592 424.8 601.3 423 606C421.2 610.7 419.7 614.7 418 620C416.3 625.3 413 638 413 638C413 638 421.5 641 425 641C428.5 641 434 638 434 638C434 638 433.3 627.3 433 622C432.7 616.7 432.7 611 432 606C431.3 601 429 592 429 592Z" fill="#ba9d85"/>
<path d="M513 545C513 545 503.8 555.5 500 560C496.2 564.5 493.3 567.3 490 572C486.7 576.7 483 583 480 588C477 593 474 596.7 472 602C470 607.3 468.8 614.5 468 620C467.2 625.5 466.7 630.8 467 635C467.3 639.2 470 645 470 645C470 645 476.5 645.8 479 645C481.5 644.2 483.7 643.3 485 640C486.3 636.7 486.2 630 487 625C487.8 620 488.5 615.5 490 610C491.5 604.5 494 597.5 496 592C498 586.5 500 582 502 577C504 572 506.2 567.3 508 562C509.8 556.7 513 545 513 545Z" fill="#ba9d85"/>
<clipPath id="hc"><path d="M387 359C387 359 392.7 352.7 396 350C399.3 347.3 403 345 407 343C411 341 416.2 340 420 338C423.8 336 427.2 333.7 430 331C432.8 328.3 435.2 324.2 437 322C438.8 319.8 439.4 320.5 440.5 318C441.6 315.5 442.3 310.7 443.5 307C444.7 303.3 445.5 300.8 447.6 296C449.7 291.2 453.1 283.6 456 278C458.9 272.4 462 267.3 465 262.6C468 257.9 471.1 254.1 474 250C476.9 245.9 479.9 241.8 482.7 238C485.5 234.2 488.1 230.9 491 227.5C493.9 224.1 497 220.7 500 217.8C503 214.9 506 212.5 509 210C512 207.5 515 205.2 518 203C521 200.8 524.1 198.4 527 196.5C529.9 194.6 532.7 192.9 535.5 191.4C538.3 189.9 541.1 188.7 544 187.5C546.9 186.3 550 185.3 553 184.4C556 183.5 559.1 182.8 562 182.3C564.9 181.8 567.6 181.5 570.6 181.4C573.6 181.3 577.1 181.5 580 181.8C582.9 182.2 585.2 182.6 588 183.5C590.8 184.4 594 184.9 597 187.5C600 190.1 606 199 606 199C606 199 610.5 196.8 613 196C615.5 195.2 616.5 194.9 621 194.5C625.5 194.1 633.8 193.5 640 193.5C646.2 193.5 652.8 193.9 658 194.5C663.2 195.1 666.8 195.8 671 197C675.2 198.2 679.2 199.8 683 202C686.8 204.2 690.7 207 694 210C697.3 213 699.8 216 703 220C706.2 224 710 229 713 234C716 239 718.3 244 721 250C723.7 256 726.5 263.3 729 270C731.5 276.7 733.8 283.3 736 290C738.2 296.7 740.3 303.3 742 310C743.7 316.7 744.8 322.5 746 330C747.2 337.5 748.2 346.7 749 355C749.8 363.3 750.6 373.8 751 380C751.4 386.2 751.3 388.2 751.5 392C751.7 395.8 750.8 399.8 752 403C753.2 406.2 756.5 408.3 759 411C761.5 413.7 764.3 416.6 766.8 419.4C769.3 422.2 771.5 425.1 774 428C776.5 430.9 779 434 781.5 437C784 440 786.6 443.1 789 446C791.4 448.9 793.7 452.2 796 454.7C798.3 457.2 800.5 459 803 461C805.5 463 807.7 464.5 810.9 466.5C814.1 468.5 822 473 822 473C822 473 819.4 476.5 818 478C816.6 479.5 813.8 482 813.8 482C813.8 482 813.8 488.5 813.8 488.5C813.8 488.5 810.2 491.4 808 492.5C805.8 493.6 802.9 494.4 800.6 495C798.3 495.6 796 495.8 794 496C792 496.2 790.6 496.3 788.8 496C787 495.7 784.7 494.8 783 494C781.3 493.2 780.1 492.9 778.5 491.5C776.9 490.1 775 487.8 773.5 485.5C772 483.2 769.7 478 769.7 478C769.7 478 769.6 483 770 486C770.4 489 771 492.8 772 496C773 499.2 774.5 501 776 505C777.5 509 779 515.2 781 520C783 524.8 785.5 528.7 788 534C790.5 539.3 793.5 545.7 796 552C798.5 558.3 801.3 566.2 803 572C804.7 577.8 805.5 582 806 587C806.5 592 807.2 596.2 806 602C804.8 607.8 802 616.2 799 622C796 627.8 792.2 633 788 637C783.8 641 779 643.8 774 646C769 648.2 763.3 649 758 650C752.7 651 747.3 651.7 742 652C736.7 652.3 730.7 652.7 726 652C721.3 651.3 717.3 650 714 648C710.7 646 708.3 643.3 706 640C703.7 636.7 701.3 632.2 700 628C698.7 623.8 698.5 621.3 698 615C697.5 608.7 697.3 598.3 697 590C696.7 581.7 696.5 571.3 696 565C695.5 558.7 694.8 556.2 694 552C693.2 547.8 692.3 546.2 691 540C689.7 533.8 687.7 523.3 686 515C684.3 506.7 682.3 497.5 681 490C679.7 482.5 679 476.7 678 470C677 463.3 675 450 675 450C675 450 672.2 456 670 458C667.8 460 665 461.2 662 462C659 462.8 655.7 462.7 652 463C648.3 463.3 643.7 463.5 640 464C636.3 464.5 633.2 465.7 630 466C626.8 466.3 621 466 621 466C621 466 616.8 458.3 615 454C613.2 449.7 611.8 445.7 610 440C608.2 434.3 605.9 426.7 604 420C602.1 413.3 600 406.3 598.7 400C597.4 393.7 596 382 596 382C596 382 592.2 401 590 410C587.8 419 584.7 430.2 583 436C581.3 441.8 580.9 442.2 580 445C579.1 447.8 578.5 450.7 577.5 452.5C576.5 454.3 575.7 455.2 574 456C572.3 456.8 570 457.7 567.5 457.5C565 457.3 561.9 456.2 559 455C556.1 453.8 553 451.8 550 450C547 448.2 543.9 446.5 541 444C538.1 441.5 534.8 437.8 532.5 435C530.2 432.2 528.8 430 527 427C525.2 424 522 417 522 417C522 417 520 440 520 440C520 440 516.8 453.3 516 460C515.2 466.7 515 474.5 515 480C515 485.5 515.2 488.8 516 493C516.8 497.2 519.3 499.7 520 505C520.7 510.3 520.5 518.2 520 525C519.5 531.8 518.3 538.8 517 546C515.7 553.2 513.7 560.7 512 568C510.3 575.3 509 582.2 507 590C505 597.8 502.8 606.7 500 615C497.2 623.3 493.7 635 490 640C486.3 645 482.2 644.2 478 645C473.8 645.8 469.3 645.5 465 645C460.7 644.5 456.2 643.3 452 642C447.8 640.7 444 637 440 637C436 637 432.2 640.8 428 642C423.8 643.2 420.2 644 415 644C409.8 644 402.8 643.2 397 642C391.2 640.8 385.3 638.7 380 637C374.7 635.3 369.2 634 365 632C360.8 630 357.5 627.8 355 625C352.5 622.2 350.8 618.3 350 615C349.2 611.7 349.7 608.8 350 605C350.3 601.2 350.8 596.2 352 592C353.2 587.8 354.6 585.3 357 580C359.4 574.7 363.1 567.6 366.5 560C369.9 552.4 373.8 543.1 377.5 534.4C381.2 525.7 384.8 516.8 388.5 508C392.2 499.2 395.9 490.3 399.6 481.5C403.3 472.7 407.3 463.8 410.6 455C413.9 446.2 416.5 436.9 419.4 428.5C422.3 420.1 424.8 411.4 428.2 404.3C431.6 397.2 440 386 440 386C440 386 437.3 380.5 436 378C434.7 375.5 432 371 432 371C432 371 427.8 370.3 425 370C422.2 369.7 418.8 369.5 415 369C411.2 368.5 405.5 367.8 402 367C398.5 366.2 396.5 365.3 394 364C391.5 362.7 387 359 387 359Z"/></clipPath><g clip-path="url(#hc)">
<path d="M454 388C461 382 483.2 378.7 488 384C492.8 389.3 484.7 409 483 420C481.3 431 484 444.7 478 450C472 455.3 452.3 457 447 452C441.7 447 444.8 430.7 446 420C447.2 409.3 447 394 454 388Z" fill="#fde3d3" opacity="0.95" filter="url(#b5)"/>
<path d="M541 328C547.8 319.7 566.5 317.5 574 322C581.5 326.5 584.7 342.8 586 355C587.3 367.2 588.8 387.2 582 395C575.2 402.8 553.2 405.8 545 402C536.8 398.2 533.7 384.3 533 372C532.3 359.7 534.2 336.3 541 328Z" fill="#fde3d3" opacity="0.9" filter="url(#b5)"/>
<path d="M612 384C619.3 380.2 650 379 658 382C666 385 667.3 398.2 660 402C652.7 405.8 622 408 614 405C606 402 604.7 387.8 612 384Z" fill="#fde3d3" opacity="1.0" filter="url(#b3)"/>
<path d="M615 345C621.5 338.8 645.3 339.2 652 345C658.7 350.8 661.5 373.8 655 380C648.5 386.2 619.7 387.8 613 382C606.3 376.2 608.5 351.2 615 345Z" fill="#fde3d3" opacity="0.5" filter="url(#b5)"/>
<path d="M615 410C620.8 406.7 647.8 407 655 410C662.2 413 663.8 424.7 658 428C652.2 431.3 627.2 433 620 430C612.8 427 609.2 413.3 615 410Z" fill="#d2b29c" opacity="0.35" filter="url(#b5)"/>
<path d="M678 340C681 331.2 694 335.8 698 345C702 354.2 705 386.2 702 395C699 403.8 684 407.2 680 398C676 388.8 675 348.8 678 340Z" fill="#fde3d3" opacity="0.7" filter="url(#b5)"/>
<path d="M716 365C719.8 358 739.3 358.8 745 368C750.7 377.2 748.8 405.5 750 420C751.2 434.5 754.5 449.2 752 455C749.5 460.8 740 462.5 735 455C730 447.5 725.2 425 722 410C718.8 395 712.2 372 716 365Z" fill="#fde3d3" opacity="0.9" filter="url(#b5)"/>
<path d="M374 575C379.8 567.8 399 567.8 405 572C411 576.2 411.7 591.7 410 600C408.3 608.3 401.7 619.5 395 622C388.3 624.5 373.5 622.8 370 615C366.5 607.2 368.2 582.2 374 575Z" fill="#fde3d3" opacity="0.9" filter="url(#b5)"/>
<path d="M448 590C451 584.3 466 583.8 470 588C474 592.2 475 609.3 472 615C469 620.7 456 626.2 452 622C448 617.8 445 595.7 448 590Z" fill="#fde3d3" opacity="0.9" filter="url(#b5)"/>
<path d="M730 568C737.5 558 774.7 559.7 785 565C795.3 570.3 792.8 589.5 792 600C791.2 610.5 788.7 623.8 780 628C771.3 632.2 748.3 635 740 625C731.7 615 722.5 578 730 568Z" fill="#fde3d3" opacity="0.85" filter="url(#b5)"/>
<path d="M388 615C391 611.7 406 613.8 410 618C414 622.2 415 636.7 412 640C409 643.3 396 642.2 392 638C388 633.8 385 618.3 388 615Z" fill="#cfae98" opacity="0.4" filter="url(#b5)"/>
<path d="M738 622C740.7 617.3 754.3 614.7 758 618C761.7 621.3 762.7 637.3 760 642C757.3 646.7 745.7 649.3 742 646C738.3 642.7 735.3 626.7 738 622Z" fill="#cfae98" opacity="0.4" filter="url(#b5)"/>
</g>
<filter id="b0" x="-10%" y="-10%" width="120%" height="120%"><feGaussianBlur stdDeviation="0.45"/></filter><g filter="url(#b0)">
<path d="M456.4 394.7Q447.8 415.5 445.6 442.7Q455.3 417.1 456.4 394.7Z" fill="#fff"/>
<path d="M471.0 400.6Q462.5 420.5 459.8 446.7Q469.4 422.2 471.0 400.6Z" fill="#fff"/>
<path d="M441.7 423.0L445.0 420.0L449.5 417.0L452.0 421.0L454.4 424.0L459.3 426.0L463.0 422.0L468.0 420.0L471.0 424.0L474.0 427.0" fill="none" stroke="#fff" stroke-width="3.74" stroke-linejoin="round" stroke-linecap="round"/>
<path d="M499 430L502 424L506 430Z" fill="#fff" stroke="#fff" stroke-width="1.5" stroke-linejoin="round"/>
<path d="M499.0 430.0Q496.2 437.0 497.0 446.0Q500.0 437.4 499.0 430.0Z" fill="#fff"/>
<path d="M553.7 346.0Q544.6 368.3 541.0 397.5Q551.4 370.0 553.7 346.0Z" fill="#fff"/>
<path d="M568.7 362.5Q563.9 378.5 565.0 398.7Q570.2 379.1 568.7 362.5Z" fill="#fff"/>
<path d="M537.5 382.5L540.0 370.0L543.0 377.0L546.0 382.0L551.0 375.0L554.0 378.0L557.5 380.0L562.5 375.0L567.0 377.0L572.5 370.0" fill="none" stroke="#fff" stroke-width="2.55" stroke-linejoin="round" stroke-linecap="round"/>
<path d="M575.5 374.0L575.5 376.0" fill="none" stroke="#fff" stroke-width="2.38" stroke-linejoin="round" stroke-linecap="round"/>
<path d="M575.5 381.0L575.5 384.0" fill="none" stroke="#fff" stroke-width="2.38" stroke-linejoin="round" stroke-linecap="round"/>
<path d="M618.7 357.5Q613.2 373.5 615.0 394.0Q620.9 374.3 618.7 357.5Z" fill="#fff"/>
<path d="M644.0 362.5Q642.4 375.3 647.5 390.0Q648.7 374.5 644.0 362.5Z" fill="#fff"/>
<path d="M611.0 385.0L614.0 380.0L617.5 375.0L620.0 380.0L622.5 382.5L630.0 379.0L635.0 382.0L640.0 384.0L643.0 378.0" fill="none" stroke="#fff" stroke-width="2.72" stroke-linejoin="round" stroke-linecap="round"/>
<path d="M647.5 384.0L651.0 379.0L655.0 375.0" fill="none" stroke="#fff" stroke-width="2.72" stroke-linejoin="round" stroke-linecap="round"/>
<path d="M680.0 361.0Q680.4 381.7 690.0 405.0Q688.6 379.9 680.0 361.0Z" fill="#fff"/>
<path d="M676.0 385.0L679.0 379.0L681.0 375.0L684.0 382.0L686.0 387.5L691.0 380.0L695.0 385.0L698.0 381.0L700.0 380.0" fill="none" stroke="#fff" stroke-width="2.89" stroke-linejoin="round" stroke-linecap="round"/>
<path d="M718.7 380.0L721.0 386.0L722.5 390.0L724.0 386.0L726.0 382.5L730.0 379.0L735.0 376.0L739.0 377.5L742.5 380.0" fill="none" stroke="#fff" stroke-width="4.08" stroke-linejoin="round" stroke-linecap="round"/>
<path d="M382.5 577.5Q375.8 587.0 375.0 601.0Q382.5 589.1 382.5 577.5Z" fill="#fff"/>
<path d="M384.0 585.0L387.0 591.0L390.0 595.0L392.0 592.0L394.0 590.0L397.0 594.0L400.0 597.5L404.0 596.0L407.5 596.0" fill="none" stroke="#fff" stroke-width="2.72" stroke-linejoin="round" stroke-linecap="round"/>
<path d="M459.0 592.5Q451.7 600.3 450.0 613.0Q458.2 603.1 459.0 592.5Z" fill="#fff"/>
<path d="M457.5 600.0L460.0 604.0L462.5 607.5L465.0 605.0L467.5 604.0L470.0 607.5" fill="none" stroke="#fff" stroke-width="2.72" stroke-linejoin="round" stroke-linecap="round"/>
<path d="M732.0 586.0Q731.9 600.5 740.0 616.0Q739.3 598.5 732.0 586.0Z" fill="#fff"/>
<path d="M736.0 592.5L740.0 596.0L743.5 597.5L747.0 594.0L751.0 592.5L756.0 592.0L761.0 590.0" fill="none" stroke="#fff" stroke-width="2.72" stroke-linejoin="round" stroke-linecap="round"/>
<path d="M775.0 576.0L779.0 582.0L782.0 586.0L785.0 583.0L788.5 580.0" fill="none" stroke="#fff" stroke-width="3.06" stroke-linejoin="round" stroke-linecap="round"/>
</g></svg><div id="cap"><span style="letter-spacing:-.02px">Xong r bạn sẽ dùng màu sáng hơn màu hồi nãy để đổ bóng lớp 2</span><br><span style="letter-spacing:.02px">Này cũng quẹt xuống như cái kia nhưng mà nét để nhỏ 1 tí nha</span><br><span style="letter-spacing:.05px">Để có màu sáng thì chỉ cần kéo màu về phía tay trái</span><br><span style="letter-spacing:-.2px">Mk sử dụng màu trắng cho nổi</span><br>:))</div>
</div>
</div>
</body>
</html>
